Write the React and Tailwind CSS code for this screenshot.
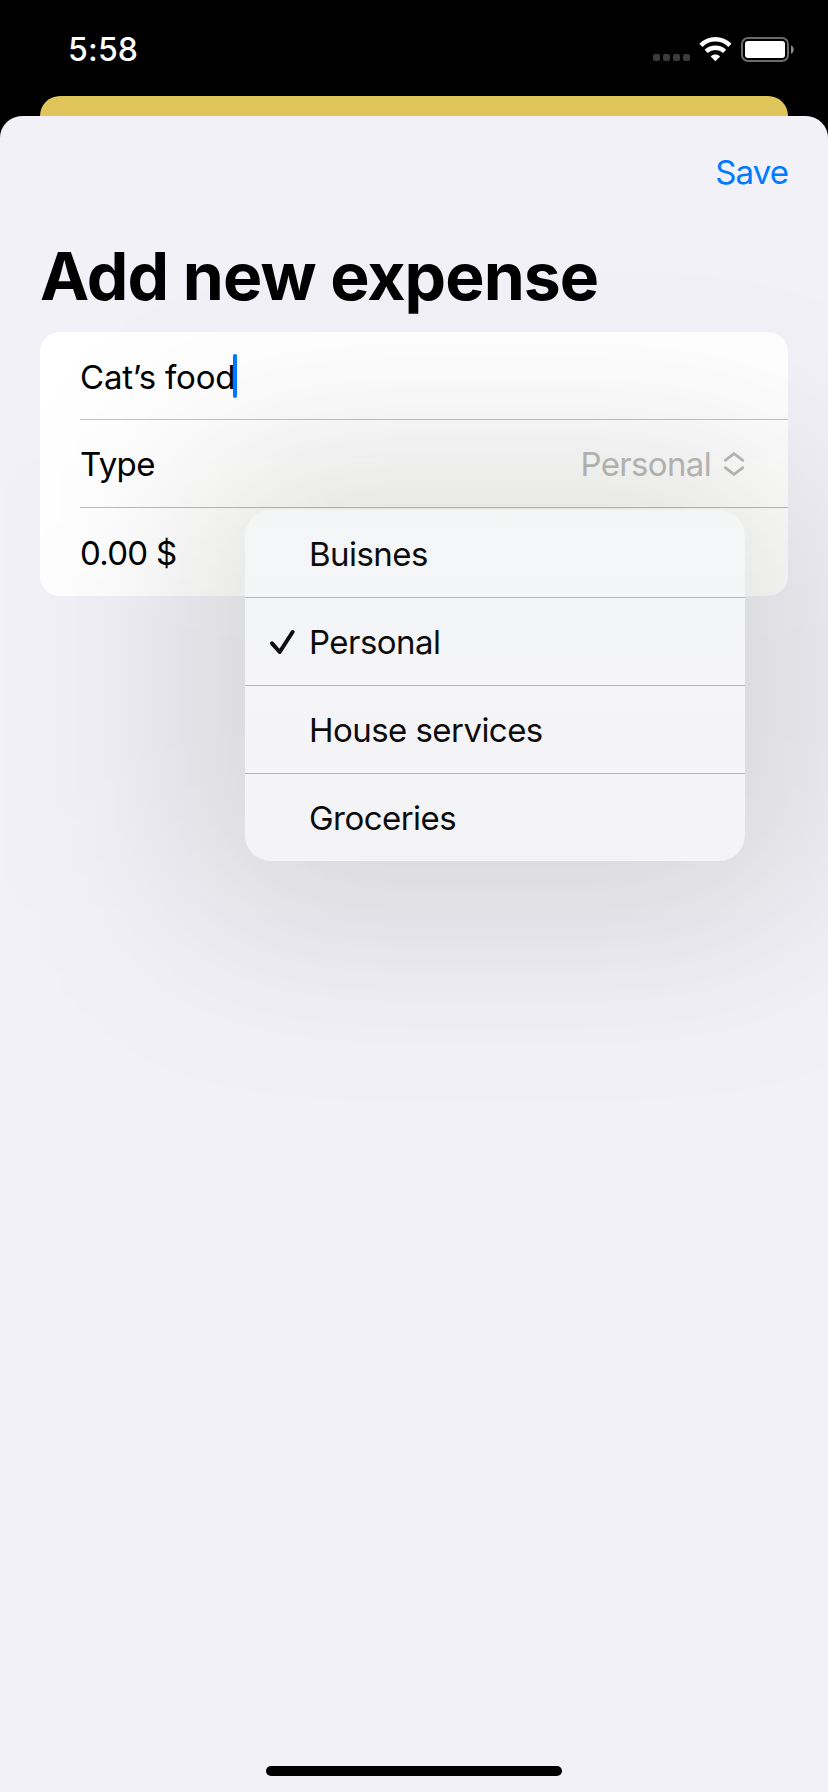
const options = [
  { label: "Buisnes" },
  { label: "Personal", selected: true },
  { label: "House services" },
  { label: "Groceries" },
];

function StatusBar() {
  return (
    <div className="flex h-24 shrink-0 items-start justify-between pl-[68px] pr-[33px] text-white">
      <span className="mt-[30px] text-[32px] leading-[40px] font-medium tracking-[0.2px]">5:58</span>
      <div className="mt-[37px] flex items-start">
        <div className="mt-[17px] flex gap-[3px]">
          {[0, 1, 2, 3].map((n) => (
            <span key={n} className="size-[7px] rounded-[2px] bg-[#3b3b3b]" />
          ))}
        </div>
        <svg className="ml-[9px]" width="33" height="25" viewBox="0 0 33 25" fill="none">
          <path d="M1.9 8.4C10 0.2 22.8 0.2 30.9 8.4" stroke="#fff" strokeWidth="4.5" />
          <path d="M7.2 14.3C12.4 9.5 20.4 9.5 25.6 14.3" stroke="#fff" strokeWidth="4.5" />
          <path d="M16.4 24.3L11.7 19.4C14.4 16.8 18.4 16.8 21.1 19.4Z" fill="#fff" />
        </svg>
        <svg className="ml-[9px]" width="54" height="25" viewBox="0 0 54 25" fill="none">
          <rect x="1" y="1" width="46" height="23" rx="6" stroke="#6b6b6b" strokeWidth="2" />
          <rect x="4" y="4" width="40" height="17" rx="3" fill="#fff" />
          <path d="M50 8.2C53.6 9.6 53.6 15.4 50 16.8Z" fill="#8a8a8a" />
        </svg>
      </div>
    </div>
  );
}

function Menu() {
  return (
    <div className="absolute top-[2px] left-[205px] z-10 h-[351px] w-[500px]">
      <div className="absolute -inset-[52px] rounded-[40px] bg-[#0a0a00]/13 blur-[95px]" />
      <div className="relative h-full rounded-[26px] bg-linear-to-b from-[#f4f6f6] via-[#f4f5f8] via-30% to-[#f4f4f7]">
        {options.map((o, i) => (
          <div
            key={o.label}
            className={
              "flex h-[88px] items-center pl-[25px] text-[#0c0c0d] " +
              (i < options.length - 1 ? "border-b border-[#b4b5b8]" : "")
            }
          >
            <span className="w-[39px]">
              {o.selected && (
                <svg width="26" height="26" viewBox="0 0 26 26" fill="none">
                  <path d="M2 14.3L9.7 23L22.6 3" stroke="#0c0c0d" strokeWidth="4" strokeLinecap="round" strokeLinejoin="round" />
                </svg>
              )}
            </span>
            <span className="tracking-[-0.55px]">{o.label}</span>
          </div>
        ))}
      </div>
    </div>
  );
}

export default function App() {
  return (
    <div className="flex h-[1792px] w-[828px] flex-col overflow-hidden bg-black font-[Inter,sans-serif] text-[33px] leading-[40px] text-black">
      <StatusBar />
      <div className="mx-10 h-5 shrink-0 rounded-t-[20px] bg-[#e0c55b]" />
      <main className="flex flex-1 flex-col overflow-hidden rounded-t-[22px] bg-[#f2f1f7]">
        <div className="flex h-[120px] items-start justify-end pt-[36px] pr-10">
          <button className="tracking-[-0.9px] text-[#007aff]">Save</button>
        </div>
        <h1 className="mb-[16px] ml-10 text-[66px] leading-[80px] font-bold tracking-[-0.95px]">Add new expense</h1>
        <section className="mx-10 h-[264px] rounded-[20px] bg-white">
          <div className="ml-10 flex h-[88px] items-center border-b border-[#c4c4c4]">
            <span className="pt-[2px] tracking-[-0.2px]">Cat’s food</span>
            <span className="-ml-[2px] h-[44px] w-[4px] rounded-full bg-[#007aff]" />
          </div>
          <div className="ml-10 flex h-[88px] items-center justify-between border-b border-[#bcbcbc] pr-[43px]">
            <span className="tracking-[-0.6px]">Type</span>
            <span className="flex items-center text-[#bcbcbc]">
              <span className="tracking-[-0.65px]">Personal</span>
              <svg className="ml-[12px]" width="22" height="26" viewBox="0 0 22 26" fill="none" stroke="currentColor" strokeWidth="2.8" strokeLinecap="round" strokeLinejoin="round">
                <path d="M2.2 9.3L11 2.6L19.8 9.3M2.2 16.7L11 23.4L19.8 16.7" />
              </svg>
            </span>
          </div>
          <div className="relative flex h-[88px] items-center pl-10">
            <span className="pt-[2px] tracking-[-0.7px]">0.00 $</span>
            <Menu />
          </div>
        </section>
        <div className="mx-auto mt-auto mb-4 h-[10px] w-[296px] rounded-full bg-black" />
      </main>
    </div>
  );
}
